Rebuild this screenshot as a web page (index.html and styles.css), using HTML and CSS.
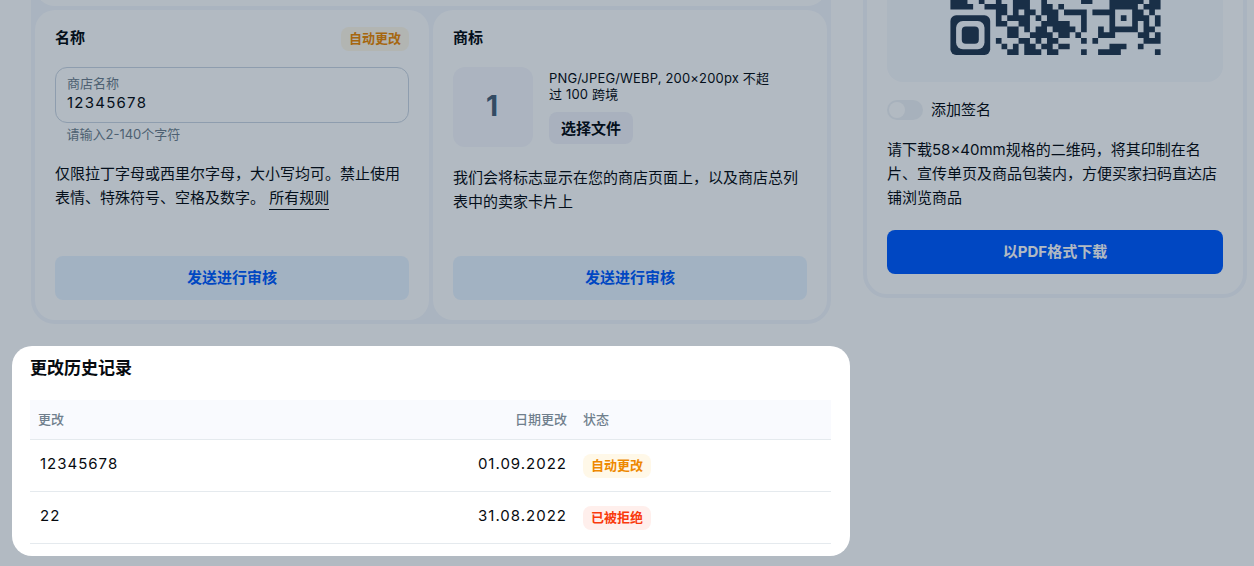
FILE: index.html
```html
<!DOCTYPE html>
<html lang="zh">
<head>
<meta charset="utf-8">
<title>更改历史记录</title>
<link rel="stylesheet" href="styles.css">
</head>
<body>
<div class="viewport">
  <div class="shell">
    <main class="group">
      <div class="card card-top"></div>
      <div class="card-row">
        <section class="card">
          <header class="card-head">
            <h3 class="card-title">名称</h3>
            <span class="badge badge-warn-dim">自动更改</span>
          </header>
          <div class="input">
            <span class="input-label">商店名称</span>
            <span class="input-value">12345678</span>
          </div>
          <p class="hint">请输入2-140个字符</p>
          <p class="para para-name">仅限拉丁字母或西里尔字母，大小写均可。禁止使用表情、特殊符号、空格及数字。 <a class="rule-link">所有规则</a></p>
          <button class="btn btn-soft">发送进行审核</button>
        </section>
        <section class="card">
          <header class="card-head">
            <h3 class="card-title">商标</h3>
          </header>
          <div class="logo-row">
            <div class="logo-box">1</div>
            <div class="logo-info">
              <p class="logo-note">PNG/JPEG/WEBP, 200×200px 不超过 100 跨境</p>
              <button class="btn-file">选择文件</button>
            </div>
          </div>
          <p class="para para-logo">我们会将标志显示在您的商店页面上，以及商店总列表中的卖家卡片上</p>
          <button class="btn btn-soft">发送进行审核</button>
        </section>
      </div>
    </main>
    <aside class="side">
      <div class="qr-panel">
        <svg class="qr" viewBox="0 -2.5 37 12.5" aria-hidden="true">
          <path class="qr-dark" d="M0 0h3v1h-3zM5 0h1v1h-1zM8 0h1v1h-1zM11 0h3v1h-3zM16 0h1v1h-1zM23 0h2v1h-2zM28 0h6v1h-6zM35 0h2v1h-2z
          M0 1h4v1h-4zM6 1h4v1h-4zM11 1h3v1h-3zM16 1h2v1h-2zM19 1h1v1h-1zM28 1h5v1h-5zM34 1h3v1h-3z
          M8 2h2v1h-2zM11 2h1v1h-1zM13 2h2v1h-2zM16 2h3v1h-3zM20 2h4v1h-4zM25 2h4v1h-4zM32 2h2v1h-2zM35 2h1v1h-1z
          M8 3h1v1h-1zM10 3h4v1h-4zM15 3h1v1h-1zM17 3h2v1h-2zM23 3h1v1h-1zM28 3h1v1h-1zM30 3h1v1h-1zM32 3h3v1h-3zM36 3h1v1h-1z
          M8 4h2v1h-2zM12 4h2v1h-2zM16 4h5v1h-5zM23 4h1v1h-1zM28 4h1v1h-1zM32 4h1v1h-1zM34 4h1v1h-1zM36 4h1v1h-1z
          M10 5h2v1h-2zM13 5h1v1h-1zM15 5h2v1h-2zM18 5h4v1h-4zM23 5h1v1h-1zM26 5h1v1h-1zM28 5h5v1h-5zM34 5h2v1h-2z
          M10 6h2v1h-2zM14 6h4v1h-4zM19 6h2v1h-2zM22 6h1v1h-1zM26 6h3v1h-3zM33 6h2v1h-2zM36 6h1v1h-1z
          M8 7h1v1h-1zM12 7h2v1h-2zM15 7h1v1h-1zM17 7h2v1h-2zM23 7h1v1h-1zM25 7h1v1h-1zM34 7h3v1h-3z
          M9 8h1v1h-1zM11 8h1v1h-1zM13 8h2v1h-2zM16 8h2v1h-2zM19 8h2v1h-2zM28 8h3v1h-3zM33 8h1v1h-1z
          M10 9h2v1h-2zM13 9h3v1h-3zM17 9h2v1h-2zM23 9h1v1h-1zM26 9h4v1h-4zM36 9h1v1h-1z"/>
          <rect class="qr-dark" x="0" y="3" width="7" height="7" rx="1"/>
          <rect class="qr-light" x="1" y="4" width="5" height="5" rx="1.2"/>
          <rect class="qr-dark" x="2" y="5" width="3" height="3" rx=".7"/>
        </svg>
      </div>
      <label class="toggle-row">
        <span class="toggle"><span class="knob"></span></span>
        <span>添加签名</span>
      </label>
      <p class="para para-side">请下载58×40mm规格的二维码，将其印制在名片、宣传单页及商品包装内，方便买家扫码直达店铺浏览商品</p>
      <button class="btn btn-primary">以PDF格式下载</button>
    </aside>
  </div>
  <div class="backdrop"></div>
  <section class="modal">
    <h2 class="modal-title">更改历史记录</h2>
    <table class="history">
      <thead>
        <tr><th class="col-change">更改</th><th class="col-date">日期更改</th><th class="col-status">状态</th></tr>
      </thead>
      <tbody>
        <tr><td class="cell-value">12345678</td><td class="cell-date">01.09.2022</td><td class="cell-status"><span class="badge badge-warn">自动更改</span></td></tr>
        <tr><td class="cell-value">22</td><td class="cell-date">31.08.2022</td><td class="cell-status"><span class="badge badge-danger">已被拒绝</span></td></tr>
      </tbody>
    </table>
  </section>
</div>
</body>
</html>
```
FILE: styles.css
```css
* { box-sizing: border-box; }
html, body { margin: 0; height: 100%; }
body {
  background: #fff;
  color: #070b10;
  font-family: Inter, "Noto Sans CJK SC", sans-serif;
  font-size: 14px;
}
h2, h3, p { margin: 0; }

.viewport { position: relative; width: 1254px; height: 566px; overflow: hidden; }

.shell {
  display: grid;
  grid-template-columns: 800px 384px;
  column-gap: 32px;
  align-items: start;
  margin: -40px 0 0 31px;
}

.group {
  display: flex;
  flex-direction: column;
  gap: 4px;
  padding: 4px;
  background: #f4f7fd;
  border-radius: 24px;
}
.card-row { display: grid; grid-template-columns: 1fr 1fr; gap: 4px; }

.card {
  display: flex;
  flex-direction: column;
  height: 310px;
  padding: 17px 20px 20px;
  background: #fff;
  border-radius: 20px;
}
.card.card-top { height: 42px; padding: 0; }

.card-head {
  display: flex;
  justify-content: space-between;
  align-items: center;
  height: 24px;
  margin-bottom: 16px;
}
.card-title { margin-top: -2px; font-size: 15px; font-weight: 700; line-height: 24px; }

.badge {
  display: inline-block;
  height: 24px;
  padding: 0 8px;
  border-radius: 8px;
  font-size: 13px;
  font-weight: 600;
  line-height: 23px;
}
.badge-warn-dim, .badge-warn { background: #fff8e8; color: #ee8800; }
.badge-danger { background: #ffefec; color: #f93a0c; }

.input {
  display: flex;
  flex-direction: column;
  height: 56px;
  padding: 8px 11px;
  border: 1px solid #ccd6e2;
  border-radius: 12px;
}
.input-label { margin-top: -1px; color: #707f8d; font-size: 13px; line-height: 16px; }
.input-value { margin-top: 2px; font-size: 15px; line-height: 20px; letter-spacing: 1.25px; }

.hint { margin: 3px 0 0 11.5px; color: #707f8d; font-size: 13px; line-height: 16px; }

.para { font-size: 15px; line-height: 24px; }
.para-name { margin-top: 20px; }
.para-logo { margin-top: 19px; }
.rule-link { display: inline-block; height: 24px; padding-bottom: 1px; border-bottom: 1px solid #070b10; line-height: 23px; }

.btn {
  display: block;
  width: 100%;
  height: 44px;
  padding: 0 0 3px;
  border: 0;
  border-radius: 8px;
  font-family: inherit;
  font-size: 15px;
  font-weight: 700;
}
.card .btn { margin-top: auto; }
.btn-soft { background: #e9f4ff; color: #005bff; }
.btn-primary { background: #005bff; color: #fff; }

.logo-row { display: flex; gap: 16px; }
.logo-box {
  display: flex;
  flex: none;
  align-items: center;
  justify-content: center;
  width: 80px;
  height: 80px;
  padding: 0 2px 2px 0;
  border-radius: 12px;
  background: #f6f7fd;
  color: #4a6078;
  font-size: 28px;
  font-weight: 700;
}
.logo-info { width: 226px; padding-top: 3px; }
.logo-note { font-size: 13px; line-height: 16px; letter-spacing: .17px; }
.btn-file {
  display: block;
  width: 84px;
  height: 32px;
  margin-top: 10px;
  padding: 0 0 1px;
  border: 0;
  border-radius: 8px;
  background: #f2f3fa;
  color: #070b10;
  font-family: inherit;
  font-size: 15px;
  font-weight: 700;
}

.side {
  padding: 20px;
  border: 4px solid #f4f7fd;
  border-radius: 24px;
  background: #fff;
}
.qr-panel {
  display: flex;
  justify-content: center;
  padding-bottom: 27px;
  border-radius: 0 0 16px 16px;
  background: #f7f9fd;
}
.qr { display: block; width: 211px; height: 71px; }
.qr-dark { fill: #253950; }
.qr-light { fill: #f7f9fd; }

.toggle-row { display: flex; align-items: center; gap: 8px; margin-top: 18px; font-size: 15px; line-height: 20px; }
.toggle { display: block; width: 36px; height: 20px; padding: 2px; border-radius: 10px; background: #f0f3f6; }
.knob { display: block; width: 16px; height: 16px; border-radius: 50%; background: #fff; }

.para-side { margin-top: 18px; }
.side .btn { margin-top: 20px; }

.backdrop {
  position: absolute;
  inset: 0;
  background: rgba(0, 26, 52, .3);
}

.modal {
  position: absolute;
  left: 12px;
  top: 346px;
  width: 838px;
  height: 210px;
  padding: 10px 19px 0 18px;
  border-radius: 20px;
  background: #fff;
}
.modal-title { font-size: 17px; font-weight: 700; line-height: 24px; }

.history { width: 801px; margin-top: 20px; border-collapse: collapse; table-layout: fixed; }
.history th {
  height: 39.5px;
  padding: 0 8px 3px;
  background: #f9fafe;
  border-bottom: 1px solid #e5eaee;
  color: #707f8d;
  font-size: 13px;
  font-weight: 500;
  text-align: left;
}
.history th.col-change { width: 400px; }
.history th.col-date { width: 145px; text-align: right; }
.history td {
  height: 52px;
  padding: 0 8px;
  border-bottom: 1px solid #e5eaee;
  font-size: 15px;
}
.history td.cell-value, .history td.cell-date { padding-bottom: 4px; letter-spacing: 1px; }
.history td.cell-value { padding-left: 10px; }
.history td.cell-date { text-align: right; }
.history td.cell-status { padding-top: 1px; }
.history .badge { vertical-align: middle; }
```
